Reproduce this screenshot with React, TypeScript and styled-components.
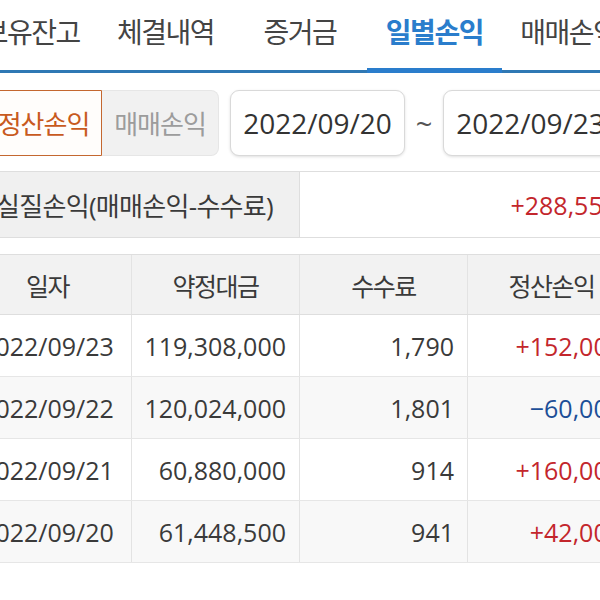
import styled, { createGlobalStyle } from "styled-components";

const GlobalStyle = createGlobalStyle`
  html, body {
    margin: 0;
    padding: 0;
    background: #ffffff;
    overflow: hidden;
  }
  body {
    font-family: "Open Sans", "Noto Sans CJK KR", sans-serif;
    color: #3a3a3a;
  }
`;

const colors = {
  text: "#3a3a3a",
  line: "#2f78b4",
  active: "#2a7dcc",
  orange: "#c85a1e",
  red: "#c3262c",
  blue: "#1d4f97",
  border: "#dedede",
};

// The view is wider than the window and is shifted left, like the cropped phone screen
const Page = styled.div`
  width: 672px;
  margin-left: -36px;
`;

const TabBar = styled.nav`
  display: grid;
  grid-template-columns: repeat(5, 1fr);
  height: 70px;
  border-bottom: 3px solid ${colors.line};
`;

const Tab = styled.div<{ $active?: boolean }>`
  position: relative;
  display: flex;
  align-items: center;
  justify-content: center;
  padding-bottom: 8px;
  font-size: 28px;
  letter-spacing: -1.5px;
  white-space: nowrap;
  color: ${(p) => (p.$active ? colors.active : "#444")};
  font-weight: ${(p) => (p.$active ? 700 : 400)};

  &::after {
    content: "";
    display: ${(p) => (p.$active ? "block" : "none")};
    position: absolute;
    left: 0;
    right: 0;
    bottom: -3px;
    height: 5px;
    background: ${colors.active};
  }
`;

const FilterRow = styled.div`
  display: flex;
  align-items: center;
  height: 66px;
  margin-top: 17px;
  padding: 0 18px 0 21px;
`;

const SegmentGroup = styled.div`
  display: flex;
  margin-right: 11px;
`;

const Segment = styled.div<{ $on?: boolean }>`
  box-sizing: border-box;
  width: 117px;
  height: 66px;
  display: flex;
  align-items: center;
  justify-content: center;
  font-size: 26px;
  letter-spacing: -1px;
  white-space: nowrap;
  color: ${(p) => (p.$on ? colors.orange : "#9c9c9c")};
  background: ${(p) => (p.$on ? "#fffdfb" : "#f1f1f1")};
  border: 1px solid ${(p) => (p.$on ? "#c4672f" : "#e6e6e6")};
  border-radius: ${(p) => (p.$on ? "8px 0 0 8px" : "0 8px 8px 0")};
  border-left-width: ${(p) => (p.$on ? "1px" : "0")};
`;

const DateBox = styled.div`
  box-sizing: border-box;
  width: 175px;
  height: 66px;
  display: flex;
  align-items: center;
  justify-content: center;
  font-size: 28px;
  color: #333;
  background: #fff;
  border: 1px solid #d9d9d9;
  border-radius: 9px;
  box-shadow: 0 1px 3px rgba(0, 0, 0, 0.13);
`;

const Tilde = styled.span`
  width: 38px;
  text-align: center;
  font-size: 29px;
  color: #555;
`;

const Summary = styled.div`
  display: grid;
  grid-template-columns: 1fr 1fr;
  height: 65px;
  margin-top: 15px;
  border-top: 1px solid ${colors.border};
  border-bottom: 1px solid ${colors.border};
`;

const SummaryLabel = styled.div`
  display: flex;
  align-items: center;
  padding-left: 32px;
  background: #f0f0f0;
  border-right: 1px solid ${colors.border};
  font-size: 26px;
  letter-spacing: -0.7px;
  white-space: nowrap;
`;

const SummaryValue = styled.div`
  display: flex;
  align-items: center;
  justify-content: flex-end;
  padding-right: 19px;
  font-size: 25px;
  color: ${colors.red};
`;

const Table = styled.div`
  margin-top: 16px;
  border-top: 1px solid ${colors.border};
`;

const Row = styled.div<{ $head?: boolean; $alt?: boolean }>`
  display: grid;
  grid-template-columns: repeat(4, 1fr);
  height: ${(p) => (p.$head ? "60px" : "62px")};
  background: ${(p) => (p.$head ? "#f2f2f2" : p.$alt ? "#f8f8f8" : "#ffffff")};
  border-bottom: 1px solid ${(p) => (p.$head ? colors.border : "#e6e6e6")};
  box-sizing: border-box;
`;

const Cell = styled.div<{ $align?: "center" | "right"; $tone?: "up" | "down" }>`
  display: flex;
  align-items: center;
  justify-content: ${(p) => (p.$align === "right" ? "flex-end" : "center")};
  padding-right: ${(p) => (p.$align === "right" ? "13px" : "0")};
  border-right: 1px solid #e3e3e3;
  font-size: 25px;
  white-space: nowrap;
  color: ${(p) =>
    p.$tone === "up" ? colors.red : p.$tone === "down" ? colors.blue : colors.text};
`;

const HeadCell = styled(Cell)`
  font-size: 25px;
  letter-spacing: -1.5px;
`;

const tabs = ["보유잔고", "체결내역", "증거금", "일별손익", "매매손익"];

const rows = [
  { date: "2022/09/23", amount: "119,308,000", fee: "1,790", pnl: "+152,000" },
  { date: "2022/09/22", amount: "120,024,000", fee: "1,801", pnl: "−60,000" },
  { date: "2022/09/21", amount: "60,880,000", fee: "914", pnl: "+160,000" },
  { date: "2022/09/20", amount: "61,448,500", fee: "941", pnl: "+42,000" },
];

export default function App() {
  return (
    <>
      <GlobalStyle />
      <Page>
        <TabBar>
          {tabs.map((t) => (
            <Tab key={t} $active={t === "일별손익"}>
              {t}
            </Tab>
          ))}
        </TabBar>

        <FilterRow>
          <SegmentGroup>
            <Segment $on>정산손익</Segment>
            <Segment>매매손익</Segment>
          </SegmentGroup>
          <DateBox>2022/09/20</DateBox>
          <Tilde>~</Tilde>
          <DateBox>2022/09/23</DateBox>
        </FilterRow>

        <Summary>
          <SummaryLabel>실질손익(매매손익-수수료)</SummaryLabel>
          <SummaryValue>+288,554</SummaryValue>
        </Summary>

        <Table>
          <Row $head>
            <HeadCell>일자</HeadCell>
            <HeadCell>약정대금</HeadCell>
            <HeadCell>수수료</HeadCell>
            <HeadCell>정산손익</HeadCell>
          </Row>
          {rows.map((r, i) => (
            <Row key={r.date} $alt={i % 2 === 1}>
              <Cell>{r.date}</Cell>
              <Cell $align="right">{r.amount}</Cell>
              <Cell $align="right">{r.fee}</Cell>
              <Cell $align="right" $tone={r.pnl.startsWith("+") ? "up" : "down"}>
                {r.pnl}
              </Cell>
            </Row>
          ))}
        </Table>
      </Page>
    </>
  );
}
